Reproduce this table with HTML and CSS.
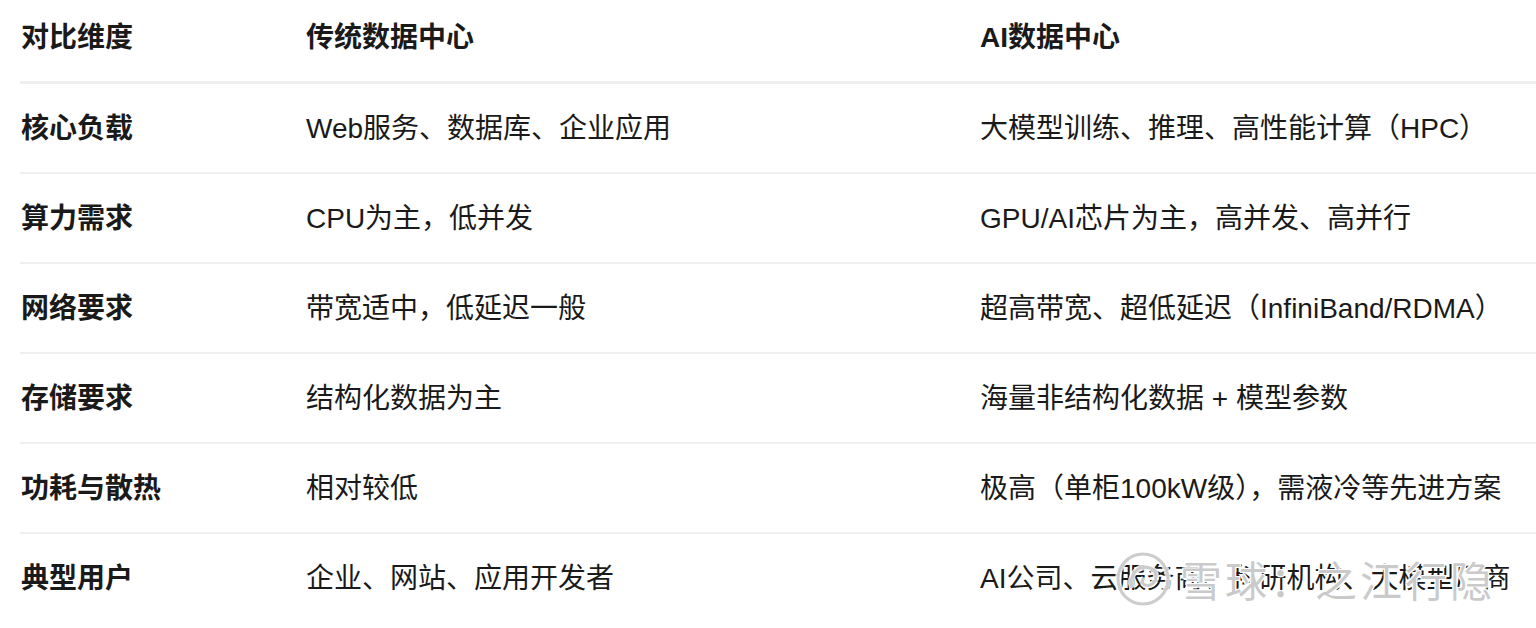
FILE: index.html
```html
<!DOCTYPE html>
<html lang="zh-CN">
<head>
<meta charset="utf-8">
<link rel="stylesheet" href="styles.css">
</head>
<body>
<div class="page">
  <table class="cmp">
    <colgroup>
      <col class="c1"><col class="c2"><col class="c3">
    </colgroup>
    <thead>
      <tr><th>对比维度</th><th>传统数据中心</th><th>AI数据中心</th></tr>
    </thead>
    <tbody>
      <tr><td class="key">核心负载</td><td>Web服务、数据库、企业应用</td><td>大模型训练、推理、高性能计算（HPC）</td></tr>
      <tr><td class="key">算力需求</td><td>CPU为主，低并发</td><td>GPU/AI芯片为主，高并发、高并行</td></tr>
      <tr><td class="key">网络要求</td><td>带宽适中，低延迟一般</td><td>超高带宽、超低延迟（InfiniBand/RDMA）</td></tr>
      <tr><td class="key">存储要求</td><td>结构化数据为主</td><td>海量非结构化数据 + 模型参数</td></tr>
      <tr><td class="key">功耗与散热</td><td>相对较低</td><td>极高（单柜100kW级），需液冷等先进方案</td></tr>
      <tr class="last"><td class="key">典型用户</td><td>企业、网站、应用开发者</td><td>AI公司、云服务商、科研机构、大模型厂商</td></tr>
    </tbody>
  </table>
  <div class="watermark">
    <svg class="wm-logo" width="58" height="58" viewBox="0 0 58 58">
      <circle cx="29" cy="29" r="25" fill="none" stroke="#ffffff" stroke-width="6" opacity="0.8"/>
      <circle cx="29" cy="29" r="25" fill="none" stroke="#cccccc" stroke-width="3"/>
      <path d="M18 38 C 14 26, 24 14, 36 18 C 44 21, 44 32, 36 35 C 30 37, 26 32, 30 28" fill="none" stroke="#ffffff" stroke-width="6" opacity="0.8"/>
      <path d="M18 38 C 14 26, 24 14, 36 18 C 44 21, 44 32, 36 35 C 30 37, 26 32, 30 28" fill="none" stroke="#cccccc" stroke-width="3"/>
    </svg>
    <span class="wm-text">雪球：之江行隐</span>
  </div>
</div>
</body>
</html>
```

FILE: styles.css
```css
html, body {
  margin: 0;
  padding: 0;
  background: #ffffff;
}
body {
  font-family: "Liberation Sans", "Noto Sans CJK SC", sans-serif;
  color: #1a1a1a;
  width: 1536px;
  height: 628px;
  overflow: hidden;
}
.page {
  position: relative;
  width: 1536px;
  height: 628px;
  padding-left: 20px;
  box-sizing: border-box;
}
.cmp {
  border-collapse: collapse;
  table-layout: fixed;
  width: 1540px;
}
.c1 { width: 285px; }
.c2 { width: 674px; }
.c3 { width: 581px; }
.cmp th, .cmp td {
  text-align: left;
  padding: 0 0 0 1px;
  font-size: 28px;
  white-space: nowrap;
  overflow: visible;
}
.cmp th {
  font-weight: 700;
  height: 82px;
  padding-bottom: 6px;
  box-sizing: border-box;
  line-height: 37px;
  vertical-align: middle;
  border-bottom: 3px solid #efefef;
}
.cmp td {
  font-weight: 400;
  height: 86px;
  padding-top: 2px;
  line-height: 37px;
  vertical-align: middle;
  border-bottom: 2px solid #efefef;
}
.cmp td.key {
  font-weight: 700;
}
.cmp tr.last td {
  border-bottom: none;
}
.watermark {
  position: absolute;
  left: 1114px;
  top: 548px;
  display: flex;
  align-items: center;
  gap: 8px;
  pointer-events: none;
}
.wm-text {
  font-family: "Noto Sans CJK SC", sans-serif;
  font-size: 42px;
  font-weight: 400;
  color: rgba(185, 185, 185, 0.75);
  letter-spacing: 3px;
  text-shadow: 1px 1px 0 #fff, -1px -1px 0 #fff, 1px -1px 0 #fff, -1px 1px 0 #fff;
}
```
